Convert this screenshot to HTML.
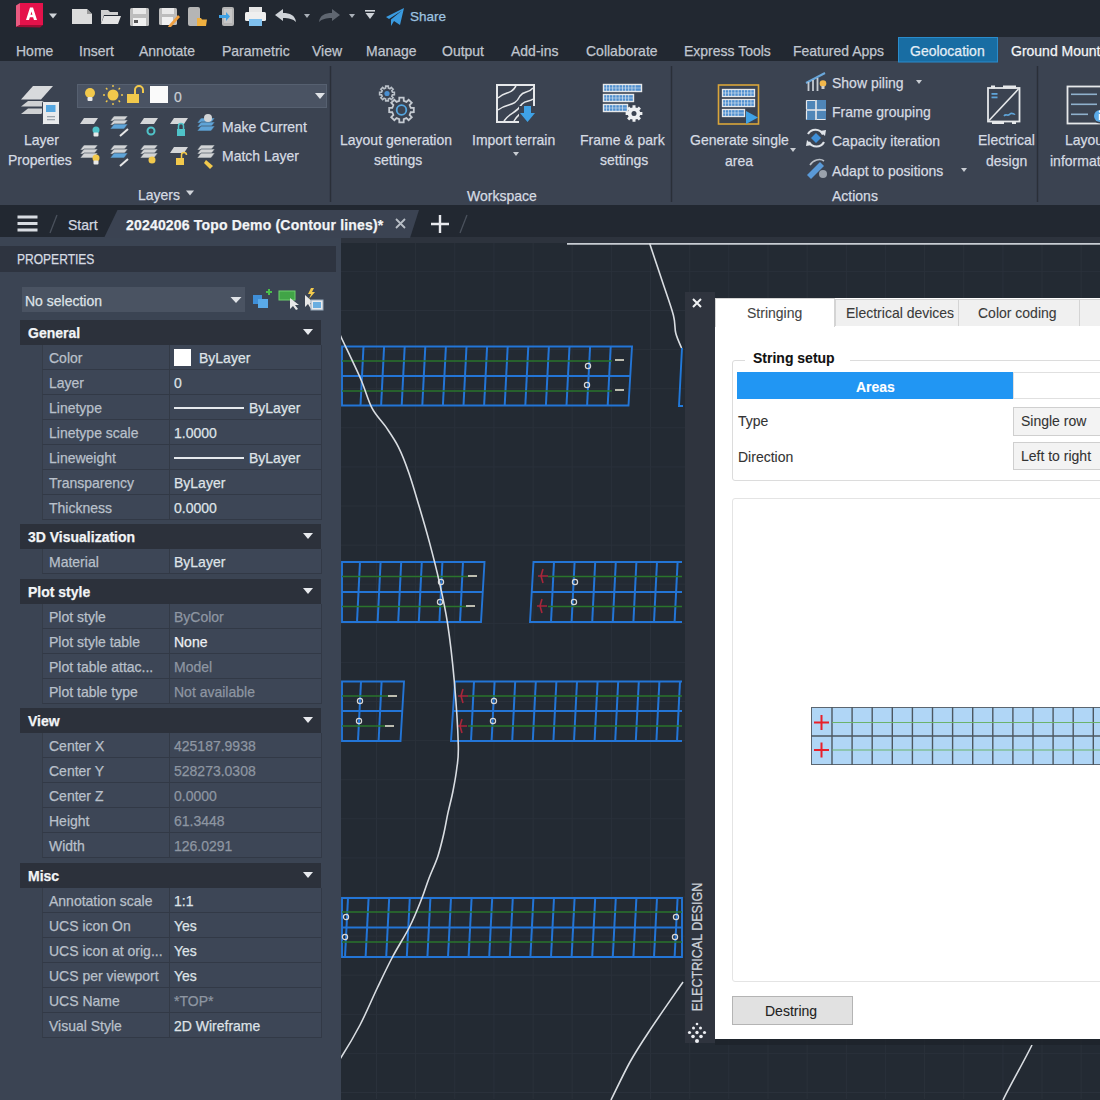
<!DOCTYPE html>
<html><head><meta charset="utf-8">
<style>
*{margin:0;padding:0;box-sizing:border-box}
body *{-webkit-text-stroke:0.25px currentColor}
html,body{width:1100px;height:1100px;overflow:hidden;background:#212730;font-family:"Liberation Sans",sans-serif;font-size:14px}
.a{position:absolute}
.t{position:absolute;white-space:nowrap;line-height:16px;height:16px}
#top{left:0;top:0;width:1100px;height:62px;background:#222831}
#ribbon{left:0;top:61px;width:1100px;height:144px;background:#3b4351}
#ftabs{left:0;top:205px;width:1100px;height:33px;background:#222831}
#strip{left:0;top:237px;width:1100px;height:6px;background:#2d333d}
#strip2{left:0;top:237px;width:341px;height:9px;background:#3b4453}
#props{left:0;top:243px;width:341px;height:857px;background:#3b4453}
#ptitle{left:0;top:246px;width:336px;height:26px;background:#2e3440}
#draw{left:341px;top:243px;width:759px;height:857px;background:#232a33;overflow:hidden}
.tab{color:#c3c9d2}
.rib{color:#d8dde4}
.hdr{left:20px;width:301px;height:25px;background:#2c313b}
.hdr span{position:absolute;left:8px;top:5.6px;line-height:16px;font-weight:700;color:#f2f4f6;font-size:15px;transform:scaleX(0.933);transform-origin:0 0}
.hdr i{position:absolute;left:283px;top:9px;width:0;height:0;border-left:5px solid transparent;border-right:5px solid transparent;border-top:6px solid #e8eaee}
.row{left:42px;width:280px;height:25px;background:#3d4656;border-bottom:1px solid #323946;border-right:1px solid #323946;border-left:1px solid #353c48}
.row .k{position:absolute;left:6px;top:5.6px;line-height:16px;color:#b9c0ca;white-space:nowrap;font-size:15px;transform:scaleX(0.933);transform-origin:0 0}
.row .v{position:absolute;left:126px;top:0;height:24px;width:152px;border-left:1px solid #333a46}
.row .v span{position:absolute;left:4px;top:5.6px;line-height:16px;color:#dfe3e8;white-space:nowrap;font-size:15px;transform:scaleX(0.933);transform-origin:0 0}
.row .v span.g{color:#8e96a2}
.row .v span.w{color:#eef0f3}
.row .v b.sw{position:absolute;left:4px;top:4px;width:17px;height:17px;background:#fff}
.row .v b.ln{position:absolute;left:4px;top:12px;width:70px;height:2px;background:#e6e9ed}

.ns{-webkit-text-stroke:0.1px currentColor}

</style></head><body>
<div id="top" class="a"></div>
<div id="ribbon" class="a"></div>
<svg class="a" style="left:0;top:0" width="1100" height="205"><path d="M20,3 L43,3 L43,25 L20,25 Z" fill="#e5124b"/><path d="M16,5.5 L20,3 L20,25 L16,27 Z" fill="#ea5a80"/><path d="M16,27 L20,25 L43,25 L40,27.5 Z" fill="#9e0c34"/><path d="M26,20 L30,7.6 L33,7.6 L37,20 L34,20 L33.1,17.2 L29.9,17.2 L29,20 Z M30.6,14.8 L32.4,14.8 L31.5,11.5 Z" fill="#fff"/><path d="M49.0,13.5 L57.0,13.5 L53,18.5 Z" fill="#cfd3d8"/><path d="M72,9 L87,9 L92,14 L92,24 L72,24 Z" fill="#dcdcdc"/><path d="M87,9 L87,14 L92,14 Z" fill="#9a9a9a"/><path d="M101,10 L108,10 L110,12 L118,12 L118,15 L104,15 L101,24 Z" fill="#cfcfcf"/><path d="M104,16 L121,16 L118,24 L101,24 Z" fill="#e4e4e4"/><rect x="130" y="8" width="19" height="18" rx="1.5" fill="#bdbdbd"/><rect x="133" y="8" width="13" height="6" fill="#e8e8e8"/><rect x="133" y="18" width="13" height="8" fill="#f0f0f0"/><rect x="134" y="20" width="4" height="3" fill="#555"/><rect x="159" y="8" width="18" height="17" rx="1.5" fill="#bdbdbd"/><rect x="162" y="8" width="12" height="6" fill="#e8e8e8"/><rect x="162" y="17" width="11" height="8" fill="#f0f0f0"/><path d="M169,25 L178,15 L180,17 L171,27 L168,27 Z" fill="#f0a040"/><rect x="188" y="7" width="12" height="19" rx="2" fill="#b5b5b5"/><path d="M197,18 L201,18 L202,19.5 L207,19.5 L206,26 L197,26 Z" fill="#f0b040"/><rect x="222" y="7" width="12" height="19" rx="2" fill="#b5b5b5"/><rect x="224" y="9" width="8" height="14" fill="#c8c8c8"/><path d="M219,15 L226,15 L226,12 L230,16.5 L226,21 L226,18 L219,18 Z" fill="#3fa2e6"/><rect x="249" y="7" width="13" height="6" fill="#e6e6e6"/><rect x="245" y="12" width="21" height="9" rx="1.5" fill="#efefef"/><rect x="249" y="19" width="13" height="7" fill="#7fc0ee"/><path d="M275,15 L283,9 L283,13 C290,13 295,15 296,22 C293,19 289,18 283,18 L283,21 Z" fill="#cfd3d8"/><path d="M304.0,14.0 L310.0,14.0 L307,18.0 Z" fill="#aab0b8"/><path d="M340,15 L332,9 L332,13 C325,13 320,15 319,22 C322,19 326,18 332,18 L332,21 Z" fill="#5f6670"/><path d="M349.0,14.0 L355.0,14.0 L352,18.0 Z" fill="#aab0b8"/><rect x="365" y="10" width="10" height="1.6" fill="#cfd3d8"/><path d="M365.5,13.0 L374.5,13.0 L370,19.0 Z" fill="#cfd3d8"/><path d="M386,17 L404,8 L400,25 L394,21 L391,26 L391,19.5 L402,10.5 L389,19 Z" fill="#3a9be0"/><line x1="330.5" y1="66" x2="330.5" y2="202" stroke="#2a2f38" stroke-width="1.5"/><line x1="671.5" y1="66" x2="671.5" y2="202" stroke="#2a2f38" stroke-width="1.5"/><line x1="1037.5" y1="66" x2="1037.5" y2="202" stroke="#2a2f38" stroke-width="1.5"/><path d="M21,114 L28,108.5 L48,108.5 L41,114 Z" fill="#cfd1d3"/><path d="M21,106.5 L28,101 L50,101 L43,106.5 Z" fill="#cfd1d3"/><path d="M21,99.5 L33,86 L53,86 L41,99.5 Z" fill="#d8dadc"/><rect x="42.5" y="101.5" width="17" height="23" rx="1" fill="#e8eaec" stroke="#3b4351" stroke-width="1"/><rect x="46" y="105" width="9.5" height="7" fill="#54a6e0"/><rect x="47" y="116" width="8" height="1.3" fill="#9aa4ad"/><rect x="47" y="119" width="8" height="1.3" fill="#9aa4ad"/><rect x="77.5" y="84.5" width="249" height="23" fill="#4a5363" stroke="#566070" stroke-width="1"/><circle cx="90" cy="93" r="5" fill="#f2c94c"/><rect x="87.5" y="97" width="5" height="4" rx="1" fill="#e8e8e8"/><circle cx="113" cy="95" r="5.5" fill="#f2c94c"/><line x1="121.0" y1="95.0" x2="123.0" y2="95.0" stroke="#f2c94c" stroke-width="1.4"/><line x1="105.0" y1="95.0" x2="103.0" y2="95.0" stroke="#f2c94c" stroke-width="1.4"/><line x1="113.0" y1="103.0" x2="113.0" y2="105.0" stroke="#f2c94c" stroke-width="1.4"/><line x1="113.0" y1="87.0" x2="113.0" y2="85.0" stroke="#f2c94c" stroke-width="1.4"/><line x1="118.6" y1="100.6" x2="120.0" y2="102.0" stroke="#f2c94c" stroke-width="1.4"/><line x1="107.4" y1="100.6" x2="106.0" y2="102.0" stroke="#f2c94c" stroke-width="1.4"/><line x1="118.6" y1="89.4" x2="120.0" y2="88.0" stroke="#f2c94c" stroke-width="1.4"/><line x1="107.4" y1="89.4" x2="106.0" y2="88.0" stroke="#f2c94c" stroke-width="1.4"/><rect x="127" y="94" width="12" height="9" fill="#f2c94c"/><path d="M135,94 L135,90 A4,4 0 0 1 143,90 L143,93" stroke="#f2c94c" stroke-width="2" fill="none"/><rect x="150" y="86" width="18" height="17" fill="#fafafa"/><path d="M315.0,93.0 L325.0,93.0 L320,99.0 Z" fill="#e0e3e7"/><path d="M84,118 L98,118 L94,124 L80,124 Z" fill="#d4d6d8"/><circle cx="96" cy="130" r="3.5" fill="#4fc3c9"/><rect x="93.5" y="132.5" width="5" height="4" rx="1" fill="#e8e8e8"/><path d="M114,116 L128,116 L124,121 L110,121 Z" fill="#d2d4d6" stroke="#3b4351" stroke-width="0.6"/><path d="M114,120 L128,120 L124,125 L110,125 Z" fill="#d2d4d6" stroke="#3b4351" stroke-width="0.6"/><path d="M114,124 L128,124 L124,129 L110,129 Z" fill="#5fa4d8" stroke="#3b4351" stroke-width="0.6"/><path d="M120,136 L128,129" stroke="#e8e8e8" stroke-width="2"/><path d="M144,118 L158,118 L154,124 L140,124 Z" fill="#d4d6d8"/><circle cx="151" cy="131" r="3.5" fill="none" stroke="#4fc3c9" stroke-width="2"/><path d="M174,118 L188,118 L184,124 L170,124 Z" fill="#d4d6d8"/><rect x="177" y="129" width="8" height="7" fill="#4fc3c9"/><path d="M178.5,129 L178.5,126 A2.5,2.5 0 0 1 183.5,126 L183.5,129" stroke="#4fc3c9" stroke-width="1.5" fill="none"/><path d="M201,118 L215,118 L211,123 L197,123 Z" fill="#5fa4d8" stroke="#3b4351" stroke-width="0.6"/><path d="M201,122 L215,122 L211,127 L197,127 Z" fill="#5fa4d8" stroke="#3b4351" stroke-width="0.6"/><path d="M201,126 L215,126 L211,131 L197,131 Z" fill="#5fa4d8" stroke="#3b4351" stroke-width="0.6"/><circle cx="208" cy="118" r="4" fill="#d2d4d6"/><path d="M84,145 L98,145 L94,150 L80,150 Z" fill="#d2d4d6" stroke="#3b4351" stroke-width="0.6"/><path d="M84,149 L98,149 L94,154 L80,154 Z" fill="#d2d4d6" stroke="#3b4351" stroke-width="0.6"/><path d="M84,153 L98,153 L94,158 L80,158 Z" fill="#d2d4d6" stroke="#3b4351" stroke-width="0.6"/><circle cx="96" cy="158" r="3.5" fill="#f2c94c"/><rect x="93.5" y="160.5" width="5" height="4" rx="1" fill="#e8e8e8"/><path d="M114,145 L128,145 L124,150 L110,150 Z" fill="#d2d4d6" stroke="#3b4351" stroke-width="0.6"/><path d="M114,149 L128,149 L124,154 L110,154 Z" fill="#d2d4d6" stroke="#3b4351" stroke-width="0.6"/><path d="M114,153 L128,153 L124,158 L110,158 Z" fill="#5fa4d8" stroke="#3b4351" stroke-width="0.6"/><path d="M120,166 L128,159" stroke="#e8e8e8" stroke-width="2"/><path d="M144,145 L158,145 L154,150 L140,150 Z" fill="#d2d4d6" stroke="#3b4351" stroke-width="0.6"/><path d="M144,149 L158,149 L154,154 L140,154 Z" fill="#d2d4d6" stroke="#3b4351" stroke-width="0.6"/><path d="M144,153 L158,153 L154,158 L140,158 Z" fill="#d2d4d6" stroke="#3b4351" stroke-width="0.6"/><circle cx="152" cy="160" r="3.5" fill="#f2c94c"/><path d="M174,147 L188,147 L184,153 L170,153 Z" fill="#d4d6d8"/><rect x="176" y="158" width="8" height="7" fill="#f2c94c"/><path d="M181.5,158 L181.5,155 A2.5,2.5 0 0 1 186.5,155" stroke="#f2c94c" stroke-width="1.5" fill="none"/><path d="M201,145 L215,145 L211,150 L197,150 Z" fill="#d2d4d6" stroke="#3b4351" stroke-width="0.6"/><path d="M201,149 L215,149 L211,154 L197,154 Z" fill="#d2d4d6" stroke="#3b4351" stroke-width="0.6"/><path d="M201,153 L215,153 L211,158 L197,158 Z" fill="#d2d4d6" stroke="#3b4351" stroke-width="0.6"/><path d="M206,160 L213,166 L210,169 L204,163 Z" fill="#f2c94c"/><path d="M186.0,190.5 L194.0,190.5 L190,195.5 Z" fill="#d0d4da"/><path d="M392.44,92.17 L394.38,92.18 L394.38,94.82 L392.44,94.83 L391.79,96.41 L393.15,97.79 L391.29,99.65 L389.91,98.29 L388.33,98.94 L388.32,100.88 L385.68,100.88 L385.67,98.94 L384.09,98.29 L382.71,99.65 L380.85,97.79 L382.21,96.41 L381.56,94.83 L379.62,94.82 L379.62,92.18 L381.56,92.17 L382.21,90.59 L380.85,89.21 L382.71,87.35 L384.09,88.71 L385.67,88.06 L385.68,86.12 L388.32,86.12 L388.33,88.06 L389.91,88.71 L391.29,87.35 L393.15,89.21 L391.79,90.59 Z" fill="none" stroke="#b9c0c8" stroke-width="1.6"/><circle cx="387" cy="93.5" r="2.6" fill="#4a8fd0"/><path d="M410.73,107.75 L413.81,107.80 L413.81,112.20 L410.73,112.25 L409.62,114.93 L411.76,117.15 L408.65,120.26 L406.43,118.12 L403.75,119.23 L403.70,122.31 L399.30,122.31 L399.25,119.23 L396.57,118.12 L394.35,120.26 L391.24,117.15 L393.38,114.93 L392.27,112.25 L389.19,112.20 L389.19,107.80 L392.27,107.75 L393.38,105.07 L391.24,102.85 L394.35,99.74 L396.57,101.88 L399.25,100.77 L399.30,97.69 L403.70,97.69 L403.75,100.77 L406.43,101.88 L408.65,99.74 L411.76,102.85 L409.62,105.07 Z" fill="none" stroke="#c4cad1" stroke-width="1.8"/><circle cx="401.5" cy="110" r="4.8" fill="none" stroke="#54a6e0" stroke-width="1.8"/><rect x="497" y="85" width="37" height="37" fill="none" stroke="#e6e8ea" stroke-width="2"/><path d="M498,98 C506,90 510,96 516,86 M498,110 C508,102 514,108 520,96 C524,90 528,94 533,88 M504,121 C510,112 516,114 522,104 C526,100 530,102 533,99 M514,121 C518,114 522,112 526,110" stroke="#e6e8ea" stroke-width="1.5" fill="none"/><rect x="519" y="106" width="17" height="18" fill="#3b4351"/><path d="M524,106 L531,106 L531,113 L535,113 L527.5,122 L520,113 L524,113 Z" fill="#3fa2e6"/><path d="M513.0,152.0 L519.0,152.0 L516,156.0 Z" fill="#c8ccd2"/><rect x="603.5" y="84.5" width="38" height="7" fill="#4f8fcf" stroke="#e6e8ea" stroke-width="1.4"/><rect x="606.0" y="85" width="0.7" height="6" fill="#d8e4ee"/><rect x="609.2" y="85" width="0.7" height="6" fill="#d8e4ee"/><rect x="612.4" y="85" width="0.7" height="6" fill="#d8e4ee"/><rect x="615.6" y="85" width="0.7" height="6" fill="#d8e4ee"/><rect x="618.8" y="85" width="0.7" height="6" fill="#d8e4ee"/><rect x="622.0" y="85" width="0.7" height="6" fill="#d8e4ee"/><rect x="625.2" y="85" width="0.7" height="6" fill="#d8e4ee"/><rect x="628.4" y="85" width="0.7" height="6" fill="#d8e4ee"/><rect x="631.6" y="85" width="0.7" height="6" fill="#d8e4ee"/><rect x="634.8" y="85" width="0.7" height="6" fill="#d8e4ee"/><rect x="604" y="87.7" width="37" height="0.6" fill="#d8e4ee"/><rect x="603.5" y="94.5" width="30" height="7" fill="#4f8fcf" stroke="#e6e8ea" stroke-width="1.4"/><rect x="606.0" y="95" width="0.7" height="6" fill="#d8e4ee"/><rect x="609.2" y="95" width="0.7" height="6" fill="#d8e4ee"/><rect x="612.4" y="95" width="0.7" height="6" fill="#d8e4ee"/><rect x="615.6" y="95" width="0.7" height="6" fill="#d8e4ee"/><rect x="618.8" y="95" width="0.7" height="6" fill="#d8e4ee"/><rect x="622.0" y="95" width="0.7" height="6" fill="#d8e4ee"/><rect x="625.2" y="95" width="0.7" height="6" fill="#d8e4ee"/><rect x="628.4" y="95" width="0.7" height="6" fill="#d8e4ee"/><rect x="604" y="97.7" width="29" height="0.6" fill="#d8e4ee"/><rect x="603.5" y="104.5" width="24" height="7" fill="#4f8fcf" stroke="#e6e8ea" stroke-width="1.4"/><rect x="606.0" y="105" width="0.7" height="6" fill="#d8e4ee"/><rect x="609.2" y="105" width="0.7" height="6" fill="#d8e4ee"/><rect x="612.4" y="105" width="0.7" height="6" fill="#d8e4ee"/><rect x="615.6" y="105" width="0.7" height="6" fill="#d8e4ee"/><rect x="618.8" y="105" width="0.7" height="6" fill="#d8e4ee"/><rect x="622.0" y="105" width="0.7" height="6" fill="#d8e4ee"/><rect x="604" y="107.7" width="23" height="0.6" fill="#d8e4ee"/><path d="M640.12,112.01 L642.37,112.01 L642.37,114.99 L640.12,114.99 L639.38,116.77 L640.97,118.36 L638.86,120.47 L637.27,118.88 L635.49,119.62 L635.49,121.87 L632.51,121.87 L632.51,119.62 L630.73,118.88 L629.14,120.47 L627.03,118.36 L628.62,116.77 L627.88,114.99 L625.63,114.99 L625.63,112.01 L627.88,112.01 L628.62,110.23 L627.03,108.64 L629.14,106.53 L630.73,108.12 L632.51,107.38 L632.51,105.13 L635.49,105.13 L635.49,107.38 L637.27,108.12 L638.86,106.53 L640.97,108.64 L639.38,110.23 Z" fill="#eef0f2"/><circle cx="634" cy="113.5" r="2.5" fill="#3b4351"/><rect x="718.5" y="85" width="40" height="39" fill="none" stroke="#d9a53a" stroke-width="1.6"/><rect x="722.5" y="89.5" width="32" height="7" fill="#4f8fcf" stroke="#e6e8ea" stroke-width="1.3"/><rect x="725.0" y="90" width="0.7" height="6" fill="#d8e4ee"/><rect x="728.2" y="90" width="0.7" height="6" fill="#d8e4ee"/><rect x="731.4" y="90" width="0.7" height="6" fill="#d8e4ee"/><rect x="734.6" y="90" width="0.7" height="6" fill="#d8e4ee"/><rect x="737.8" y="90" width="0.7" height="6" fill="#d8e4ee"/><rect x="741.0" y="90" width="0.7" height="6" fill="#d8e4ee"/><rect x="744.2" y="90" width="0.7" height="6" fill="#d8e4ee"/><rect x="747.4" y="90" width="0.7" height="6" fill="#d8e4ee"/><rect x="750.6" y="90" width="0.7" height="6" fill="#d8e4ee"/><rect x="723" y="92.7" width="31" height="0.6" fill="#d8e4ee"/><rect x="722.5" y="99.5" width="32" height="7" fill="#4f8fcf" stroke="#e6e8ea" stroke-width="1.3"/><rect x="725.0" y="100" width="0.7" height="6" fill="#d8e4ee"/><rect x="728.2" y="100" width="0.7" height="6" fill="#d8e4ee"/><rect x="731.4" y="100" width="0.7" height="6" fill="#d8e4ee"/><rect x="734.6" y="100" width="0.7" height="6" fill="#d8e4ee"/><rect x="737.8" y="100" width="0.7" height="6" fill="#d8e4ee"/><rect x="741.0" y="100" width="0.7" height="6" fill="#d8e4ee"/><rect x="744.2" y="100" width="0.7" height="6" fill="#d8e4ee"/><rect x="747.4" y="100" width="0.7" height="6" fill="#d8e4ee"/><rect x="750.6" y="100" width="0.7" height="6" fill="#d8e4ee"/><rect x="723" y="102.7" width="31" height="0.6" fill="#d8e4ee"/><rect x="722.5" y="109.5" width="22" height="7" fill="#4f8fcf" stroke="#e6e8ea" stroke-width="1.3"/><rect x="725.0" y="110" width="0.7" height="6" fill="#d8e4ee"/><rect x="728.2" y="110" width="0.7" height="6" fill="#d8e4ee"/><rect x="731.4" y="110" width="0.7" height="6" fill="#d8e4ee"/><rect x="734.6" y="110" width="0.7" height="6" fill="#d8e4ee"/><rect x="737.8" y="110" width="0.7" height="6" fill="#d8e4ee"/><rect x="723" y="112.7" width="21" height="0.6" fill="#d8e4ee"/><path d="M746,111 L758,117.5 L746,124 Z" fill="#3fa2e6"/><path d="M790.0,148.0 L796.0,148.0 L793,152.0 Z" fill="#c8ccd2"/><path d="M806,83 L825,73" stroke="#6aa7da" stroke-width="2"/><path d="M808.5,82 L808.5,91 M813,80 L813,91 M817.5,78 L817.5,91" stroke="#c5cbd2" stroke-width="1.8" fill="none"/><circle cx="823" cy="83.5" r="3.3" fill="#f2b84c"/><rect x="821.5" y="86" width="3" height="3" fill="#d0d0d0"/><rect x="806" y="100" width="20" height="20" fill="#4f86b8"/><path d="M806,110 L826,110 M816,100 L816,120" stroke="#e6e8ea" stroke-width="1.6"/><path d="M806.5,100.5 L815,100.5 M806.5,100.5 L806.5,109 M817,119.5 L825.5,119.5 M806.5,111 L806.5,119.5" stroke="#e6e8ea" stroke-width="1.2"/><path d="M808,134 A8.5,8.5 0 0 1 823,134.5" stroke="#dfe3e8" stroke-width="2.2" fill="none"/><path d="M824,142 A8.5,8.5 0 0 1 809,142" stroke="#dfe3e8" stroke-width="2.2" fill="none"/><path d="M820,131 L825,136 L826,130 Z M812,145 L807,140 L806,146 Z" fill="#dfe3e8"/><path d="M816,133 L821,138 L816,143 L811,138 Z" fill="#3f8fd8"/><path d="M807,175 L820,162 L824,166 L811,179 Z" fill="#5a9ad8"/><path d="M810,165 C813,160 820,158 824,161" stroke="#b8bec6" stroke-width="1.6" fill="none"/><circle cx="823" cy="174" r="4" fill="#9aa2ac"/><path d="M916.0,80.0 L922.0,80.0 L919,84.0 Z" fill="#c8ccd2"/><path d="M961.0,168.0 L967.0,168.0 L964,172.0 Z" fill="#c8ccd2"/><rect x="988" y="88" width="31.5" height="33.5" fill="none" stroke="#e6e8ea" stroke-width="1.8"/><rect x="991" y="85.5" width="4" height="3" fill="#e6e8ea"/><rect x="1003" y="85.5" width="13" height="3" fill="#e6e8ea"/><rect x="992" y="121" width="12" height="3" fill="#e6e8ea"/><rect x="1012" y="121" width="4" height="3" fill="#e6e8ea"/><path d="M989,120.5 L1018.5,89" stroke="#e6e8ea" stroke-width="1.6"/><rect x="991.5" y="93" width="6" height="1.8" fill="#5fa4d8"/><rect x="991.5" y="96.5" width="6" height="1.8" fill="#5fa4d8"/><path d="M1004,116 C1006,113 1008,117 1010,114 C1012,112 1014,115 1015,114" stroke="#5fa4d8" stroke-width="1.6" fill="none"/><rect x="1067.5" y="86.5" width="40" height="37" fill="none" stroke="#e6e8ea" stroke-width="1.8"/><rect x="1071" y="93.5" width="26" height="1.6" fill="#8fb0cc"/><rect x="1071" y="103.5" width="26" height="1.6" fill="#8fb0cc"/><rect x="1071" y="113.5" width="17" height="1.6" fill="#8fb0cc"/><circle cx="1100" cy="116" r="7.5" fill="#3b4351"/><circle cx="1100" cy="116" r="6" fill="#5aaae8"/><rect x="1098.8" y="114" width="2.4" height="6" fill="#fff"/><circle cx="1100" cy="111.5" r="1.2" fill="#fff"/><rect x="898.5" y="37.5" width="99" height="24.5" fill="#186da3" stroke="#2a8ccc" stroke-width="1"/><rect x="998" y="37" width="102" height="25" fill="#3b4351"/></svg><div class="t" style="left:410px;top:8.8px;color:#9ec3e0;font-size:13.5px;font-weight:400;">Share</div><div class="t" style="left:16px;top:43.0px;color:#c0c6cf;font-size:15px;transform:scaleX(0.933);transform-origin:0 0;font-weight:400;">Home</div><div class="t" style="left:79px;top:43.0px;color:#c0c6cf;font-size:15px;transform:scaleX(0.933);transform-origin:0 0;font-weight:400;">Insert</div><div class="t" style="left:139px;top:43.0px;color:#c0c6cf;font-size:15px;transform:scaleX(0.933);transform-origin:0 0;font-weight:400;">Annotate</div><div class="t" style="left:221.5px;top:43.0px;color:#c0c6cf;font-size:15px;transform:scaleX(0.933);transform-origin:0 0;font-weight:400;">Parametric</div><div class="t" style="left:312px;top:43.0px;color:#c0c6cf;font-size:15px;transform:scaleX(0.933);transform-origin:0 0;font-weight:400;">View</div><div class="t" style="left:366px;top:43.0px;color:#c0c6cf;font-size:15px;transform:scaleX(0.933);transform-origin:0 0;font-weight:400;">Manage</div><div class="t" style="left:441.5px;top:43.0px;color:#c0c6cf;font-size:15px;transform:scaleX(0.933);transform-origin:0 0;font-weight:400;">Output</div><div class="t" style="left:511px;top:43.0px;color:#c0c6cf;font-size:15px;transform:scaleX(0.933);transform-origin:0 0;font-weight:400;">Add-ins</div><div class="t" style="left:586px;top:43.0px;color:#c0c6cf;font-size:15px;transform:scaleX(0.933);transform-origin:0 0;font-weight:400;">Collaborate</div><div class="t" style="left:684px;top:43.0px;color:#c0c6cf;font-size:15px;transform:scaleX(0.933);transform-origin:0 0;font-weight:400;">Express Tools</div><div class="t" style="left:793px;top:43.0px;color:#c0c6cf;font-size:15px;transform:scaleX(0.933);transform-origin:0 0;font-weight:400;">Featured Apps</div><div class="t" style="left:910px;top:43.0px;color:#e4eef6;font-size:15px;transform:scaleX(0.933);transform-origin:0 0;font-weight:400;">Geolocation</div><div class="t" style="left:1011px;top:43.0px;color:#f4f6f8;font-size:15px;transform:scaleX(0.933);transform-origin:0 0;font-weight:400;">Ground Mount</div><div class="t" style="left:24px;top:132.0px;color:#d6dbe2;font-size:15px;transform:scaleX(0.933);transform-origin:0 0;font-weight:400;">Layer</div><div class="t" style="left:8px;top:152.0px;color:#d6dbe2;font-size:15px;transform:scaleX(0.933);transform-origin:0 0;font-weight:400;">Properties</div><div class="t" style="left:174px;top:89.0px;color:#c8cdd4;font-size:15px;transform:scaleX(0.933);transform-origin:0 0;font-weight:400;">0</div><div class="t" style="left:222px;top:118.5px;color:#d6dbe2;font-size:15px;transform:scaleX(0.933);transform-origin:0 0;font-weight:400;">Make Current</div><div class="t" style="left:222px;top:147.5px;color:#d6dbe2;font-size:15px;transform:scaleX(0.933);transform-origin:0 0;font-weight:400;">Match Layer</div><div class="t" style="left:138px;top:187.0px;color:#d6dbe2;font-size:15px;transform:scaleX(0.933);transform-origin:0 0;font-weight:400;">Layers</div><div class="t" style="left:339.5px;top:131.5px;color:#d6dbe2;font-size:15px;transform:scaleX(0.933);transform-origin:0 0;font-weight:400;">Layout generation</div><div class="t" style="left:374px;top:152.0px;color:#d6dbe2;font-size:15px;transform:scaleX(0.933);transform-origin:0 0;font-weight:400;">settings</div><div class="t" style="left:471.5px;top:131.5px;color:#d6dbe2;font-size:15px;transform:scaleX(0.933);transform-origin:0 0;font-weight:400;">Import terrain</div><div class="t" style="left:466.5px;top:187.5px;color:#d6dbe2;font-size:15px;transform:scaleX(0.933);transform-origin:0 0;font-weight:400;">Workspace</div><div class="t" style="left:580px;top:131.5px;color:#d6dbe2;font-size:15px;transform:scaleX(0.933);transform-origin:0 0;font-weight:400;">Frame &amp; park</div><div class="t" style="left:600px;top:152.0px;color:#d6dbe2;font-size:15px;transform:scaleX(0.933);transform-origin:0 0;font-weight:400;">settings</div><div class="t" style="left:689.5px;top:132.0px;color:#d6dbe2;font-size:15px;transform:scaleX(0.933);transform-origin:0 0;font-weight:400;">Generate single</div><div class="t" style="left:725px;top:153.0px;color:#d6dbe2;font-size:15px;transform:scaleX(0.933);transform-origin:0 0;font-weight:400;">area</div><div class="t" style="left:831.5px;top:75.0px;color:#d6dbe2;font-size:15px;transform:scaleX(0.933);transform-origin:0 0;font-weight:400;">Show piling</div><div class="t" style="left:831.5px;top:104.0px;color:#d6dbe2;font-size:15px;transform:scaleX(0.933);transform-origin:0 0;font-weight:400;">Frame grouping</div><div class="t" style="left:831.5px;top:133.0px;color:#d6dbe2;font-size:15px;transform:scaleX(0.933);transform-origin:0 0;font-weight:400;">Capacity iteration</div><div class="t" style="left:831.5px;top:163.0px;color:#d6dbe2;font-size:15px;transform:scaleX(0.933);transform-origin:0 0;font-weight:400;">Adapt to positions</div><div class="t" style="left:831.5px;top:187.5px;color:#d6dbe2;font-size:15px;transform:scaleX(0.933);transform-origin:0 0;font-weight:400;">Actions</div><div class="t" style="left:977.5px;top:132.0px;color:#d6dbe2;font-size:15px;transform:scaleX(0.933);transform-origin:0 0;font-weight:400;">Electrical</div><div class="t" style="left:986px;top:153.0px;color:#d6dbe2;font-size:15px;transform:scaleX(0.933);transform-origin:0 0;font-weight:400;">design</div><div class="t" style="left:1065px;top:132.0px;color:#d6dbe2;font-size:15px;transform:scaleX(0.933);transform-origin:0 0;font-weight:400;">Layout</div><div class="t" style="left:1050px;top:153.0px;color:#d6dbe2;font-size:15px;transform:scaleX(0.933);transform-origin:0 0;font-weight:400;">information</div>
<div id="ftabs" class="a"></div>
<div id="strip" class="a"></div><div id="strip2" class="a"></div>
<svg class="a" style="left:0;top:205px" width="1100" height="40"><path d="M104,33 L117.5,5 L419,5 L410,33 Z" fill="#3b4352"/><rect x="17.5" y="10.5" width="20" height="3" fill="#d8dce2"/><rect x="17.5" y="17.0" width="20" height="3" fill="#d8dce2"/><rect x="17.5" y="23.5" width="20" height="3" fill="#d8dce2"/><line x1="57" y1="10" x2="50" y2="28" stroke="#4a515c" stroke-width="1.3"/><path d="M396,14 L405,23 M405,14 L396,23" stroke="#b8bec6" stroke-width="1.8"/><path d="M431,19 L449,19 M440,10 L440,28" stroke="#e8eaee" stroke-width="2.4"/><line x1="467" y1="10" x2="460" y2="28" stroke="#4a515c" stroke-width="1.3"/></svg><div class="t" style="left:68px;top:217.0px;color:#d4d9e0;font-size:15px;transform:scaleX(0.933);transform-origin:0 0;font-weight:400;">Start</div><div class="t" style="left:126px;top:217.0px;color:#f2f4f6;font-size:15px;transform:scaleX(0.933);transform-origin:0 0;font-weight:700;letter-spacing:0.2px">20240206 Topo Demo (Contour lines)*</div>
<div id="props" class="a"></div>
<div id="ptitle" class="a"><span class="t" style="left:17px;top:4.5px;font-size:14px;color:#d6dbe2;transform:scaleX(0.86);transform-origin:0 0">PROPERTIES</span></div>
<div class="a" style="left:22px;top:287px;width:223px;height:25px;background:#4a5362"></div><div class="t" style="left:25px;top:293.0px;color:#dfe3e8;font-size:15px;transform:scaleX(0.933);transform-origin:0 0;font-weight:400;">No selection</div><svg class="a" style="left:0;top:280px" width="341" height="40"><path d="M230.5,17.0 L241.5,17.0 L236,23.0 Z" fill="#e0e3e7"/><rect x="253" y="15" width="9" height="9" fill="#3f8fd8"/><rect x="258" y="19" width="10" height="9" fill="#5aaae8"/><path d="M266,12 L272,12 M269,9 L269,15" stroke="#4cbf4c" stroke-width="2"/><rect x="279" y="11" width="16" height="9" fill="#41a447" stroke="#6fcf6f" stroke-width="1"/><path d="M290,18 L290,29 L293,26 L296,30 L298,29 L295,25 L299,25 Z" fill="#e8e8e8"/><path d="M305,15 L305,27 L308,24 L311,29 L313,28 L310,23 L314,23 Z" fill="#e8e8e8"/><rect x="311" y="20" width="12" height="10" fill="#e8eaec" stroke="#9ab" stroke-width="1"/><rect x="313" y="22" width="8" height="6" fill="#6aaee0"/><path d="M311,8 L308,14 L311,14 L309,19 L315,12 L312,12 L314,8 Z" fill="#f2c94c"/></svg>
<div class="a hdr" style="top:319.5px"><span>General</span><i></i></div>
<div class="a row" style="top:344.5px"><div class="k">Color</div><div class="v"><b class="sw"></b><span style="left:29px">ByLayer</span></div></div>
<div class="a row" style="top:369.5px"><div class="k">Layer</div><div class="v"><span>0</span></div></div>
<div class="a row" style="top:394.5px"><div class="k">Linetype</div><div class="v"><b class="ln"></b><span style="left:79px">ByLayer</span></div></div>
<div class="a row" style="top:419.5px"><div class="k">Linetype scale</div><div class="v"><span>1.0000</span></div></div>
<div class="a row" style="top:444.5px"><div class="k">Lineweight</div><div class="v"><b class="ln"></b><span style="left:79px">ByLayer</span></div></div>
<div class="a row" style="top:469.5px"><div class="k">Transparency</div><div class="v"><span>ByLayer</span></div></div>
<div class="a row" style="top:494.5px"><div class="k">Thickness</div><div class="v"><span>0.0000</span></div></div>
<div class="a hdr" style="top:523.5px"><span>3D Visualization</span><i></i></div>
<div class="a row" style="top:548.5px"><div class="k">Material</div><div class="v"><span>ByLayer</span></div></div>
<div class="a hdr" style="top:578.5px"><span>Plot style</span><i></i></div>
<div class="a row" style="top:603.5px"><div class="k">Plot style</div><div class="v"><span class="g">ByColor</span></div></div>
<div class="a row" style="top:628.5px"><div class="k">Plot style table</div><div class="v"><span class="w">None</span></div></div>
<div class="a row" style="top:653.5px"><div class="k">Plot table attac...</div><div class="v"><span class="g">Model</span></div></div>
<div class="a row" style="top:678.5px"><div class="k">Plot table type</div><div class="v"><span class="g">Not available</span></div></div>
<div class="a hdr" style="top:707.5px"><span>View</span><i></i></div>
<div class="a row" style="top:732.5px"><div class="k">Center X</div><div class="v"><span class="g">425187.9938</span></div></div>
<div class="a row" style="top:757.5px"><div class="k">Center Y</div><div class="v"><span class="g">528273.0308</span></div></div>
<div class="a row" style="top:782.5px"><div class="k">Center Z</div><div class="v"><span class="g">0.0000</span></div></div>
<div class="a row" style="top:807.5px"><div class="k">Height</div><div class="v"><span class="g">61.3448</span></div></div>
<div class="a row" style="top:832.5px"><div class="k">Width</div><div class="v"><span class="g">126.0291</span></div></div>
<div class="a hdr" style="top:862.5px"><span>Misc</span><i></i></div>
<div class="a row" style="top:887.5px"><div class="k">Annotation scale</div><div class="v"><span>1:1</span></div></div>
<div class="a row" style="top:912.5px"><div class="k">UCS icon On</div><div class="v"><span>Yes</span></div></div>
<div class="a row" style="top:937.5px"><div class="k">UCS icon at orig...</div><div class="v"><span>Yes</span></div></div>
<div class="a row" style="top:962.5px"><div class="k">UCS per viewport</div><div class="v"><span>Yes</span></div></div>
<div class="a row" style="top:987.5px"><div class="k">UCS Name</div><div class="v"><span class="g">*TOP*</span></div></div>
<div class="a row" style="top:1012.5px"><div class="k">Visual Style</div><div class="v"><span>2D Wireframe</span></div></div>
<div id="draw" class="a"><svg width="759" height="857" style="position:absolute;left:0;top:0"><path d="M35.5,0V856 M74.6,0V856 M113.8,0V856 M152.9,0V856 M192.1,0V856 M231.2,0V856 M270.4,0V856 M309.5,0V856 M348.7,0V856 M387.8,0V856 M427.0,0V856 M466.1,0V856 M505.3,0V856 M544.4,0V856 M583.6,0V856 M622.7,0V856 M661.9,0V856 M701.0,0V856 M740.2,0V856 M0,28.4H759 M0,67.5H759 M0,106.6H759 M0,145.7H759 M0,184.8H759 M0,223.9H759 M0,263.0H759 M0,302.1H759 M0,341.2H759 M0,380.3H759 M0,419.4H759 M0,458.5H759 M0,497.6H759 M0,536.7H759 M0,575.8H759 M0,614.9H759 M0,654.0H759 M0,693.1H759 M0,732.2H759 M0,771.3H759 M0,810.4H759 M0,849.5H759" stroke="#2a313b" stroke-width="1" fill="none"/><line x1="226" y1="0.8" x2="759" y2="0.8" stroke="#c8cdd3" stroke-width="1.8"/><path d="M1.0,103.5 L291.0,103.5 L287.5,162.5 L1.0,162.5 Z" fill="none" stroke="#2375d6" stroke-width="1.9"/><line x1="1.0" y1="133" x2="289.2" y2="133" stroke="#2375d6" stroke-width="2"/><line x1="22.5" y1="103.5" x2="19.5" y2="162.5" stroke="#2375d6" stroke-width="2"/><line x1="43.1" y1="103.5" x2="40.1" y2="162.5" stroke="#2375d6" stroke-width="2"/><line x1="63.7" y1="103.5" x2="60.7" y2="162.5" stroke="#2375d6" stroke-width="2"/><line x1="84.3" y1="103.5" x2="81.3" y2="162.5" stroke="#2375d6" stroke-width="2"/><line x1="104.9" y1="103.5" x2="101.9" y2="162.5" stroke="#2375d6" stroke-width="2"/><line x1="125.5" y1="103.5" x2="122.5" y2="162.5" stroke="#2375d6" stroke-width="2"/><line x1="146.1" y1="103.5" x2="143.1" y2="162.5" stroke="#2375d6" stroke-width="2"/><line x1="166.7" y1="103.5" x2="163.7" y2="162.5" stroke="#2375d6" stroke-width="2"/><line x1="187.3" y1="103.5" x2="184.3" y2="162.5" stroke="#2375d6" stroke-width="2"/><line x1="207.9" y1="103.5" x2="204.9" y2="162.5" stroke="#2375d6" stroke-width="2"/><line x1="228.5" y1="103.5" x2="225.5" y2="162.5" stroke="#2375d6" stroke-width="2"/><line x1="249.1" y1="103.5" x2="246.1" y2="162.5" stroke="#2375d6" stroke-width="2"/><line x1="269.7" y1="103.5" x2="266.7" y2="162.5" stroke="#2375d6" stroke-width="2"/><line x1="1" y1="118" x2="271" y2="118" stroke="#2a742c" stroke-width="1.7"/><line x1="1" y1="148" x2="271" y2="148" stroke="#2a742c" stroke-width="1.7"/><circle cx="247" cy="123" r="2.6" fill="none" stroke="#d8d8d8" stroke-width="1.2"/><circle cx="246" cy="142" r="2.6" fill="none" stroke="#d8d8d8" stroke-width="1.2"/><line x1="274" y1="117" x2="283" y2="117" stroke="#bdbdb0" stroke-width="2"/><line x1="274" y1="147" x2="283" y2="147" stroke="#bdbdb0" stroke-width="2"/><path d="M1.0,319.0 L143.5,319.0 L140.0,379.0 L1.0,379.0 Z" fill="none" stroke="#2375d6" stroke-width="1.9"/><line x1="1.0" y1="349" x2="141.8" y2="349" stroke="#2375d6" stroke-width="2"/><line x1="19.0" y1="319" x2="16.0" y2="379" stroke="#2375d6" stroke-width="2"/><line x1="39.6" y1="319" x2="36.6" y2="379" stroke="#2375d6" stroke-width="2"/><line x1="60.2" y1="319" x2="57.2" y2="379" stroke="#2375d6" stroke-width="2"/><line x1="80.8" y1="319" x2="77.8" y2="379" stroke="#2375d6" stroke-width="2"/><line x1="101.4" y1="319" x2="98.4" y2="379" stroke="#2375d6" stroke-width="2"/><line x1="122.0" y1="319" x2="119.0" y2="379" stroke="#2375d6" stroke-width="2"/><line x1="1" y1="333.5" x2="127" y2="333.5" stroke="#2a742c" stroke-width="1.7"/><line x1="1" y1="363.5" x2="127" y2="363.5" stroke="#2a742c" stroke-width="1.7"/><circle cx="100" cy="339" r="2.6" fill="none" stroke="#d8d8d8" stroke-width="1.2"/><circle cx="99" cy="359" r="2.6" fill="none" stroke="#d8d8d8" stroke-width="1.2"/><line x1="127" y1="333" x2="136" y2="333" stroke="#bdbdb0" stroke-width="2"/><line x1="125" y1="363" x2="134" y2="363" stroke="#bdbdb0" stroke-width="2"/><path d="M341.0,319.0 L192.5,319.0 L189.0,379.0 L341.0,379.0" fill="none" stroke="#2375d6" stroke-width="1.9"/><line x1="190.8" y1="349" x2="341.0" y2="349" stroke="#2375d6" stroke-width="2"/><line x1="213.0" y1="319" x2="210.0" y2="379" stroke="#2375d6" stroke-width="2"/><line x1="233.6" y1="319" x2="230.6" y2="379" stroke="#2375d6" stroke-width="2"/><line x1="254.2" y1="319" x2="251.2" y2="379" stroke="#2375d6" stroke-width="2"/><line x1="274.8" y1="319" x2="271.8" y2="379" stroke="#2375d6" stroke-width="2"/><line x1="295.4" y1="319" x2="292.4" y2="379" stroke="#2375d6" stroke-width="2"/><line x1="316.0" y1="319" x2="313.0" y2="379" stroke="#2375d6" stroke-width="2"/><line x1="336.6" y1="319" x2="333.6" y2="379" stroke="#2375d6" stroke-width="2"/><line x1="207" y1="333.5" x2="341" y2="333.5" stroke="#2a742c" stroke-width="1.7"/><line x1="207" y1="363.5" x2="341" y2="363.5" stroke="#2a742c" stroke-width="1.7"/><path d="M207.0,333.0 L197.0,333.0 M202.0,326.0 L200.0,333.0 L202.0,340.0" stroke="#a8263a" stroke-width="1.6" fill="none"/><path d="M206.0,363.0 L196.0,363.0 M201.0,356.0 L199.0,363.0 L201.0,370.0" stroke="#a8263a" stroke-width="1.6" fill="none"/><circle cx="234" cy="339" r="2.6" fill="none" stroke="#d8d8d8" stroke-width="1.2"/><circle cx="233" cy="359" r="2.6" fill="none" stroke="#d8d8d8" stroke-width="1.2"/><path d="M1.0,438.5 L63.0,438.5 L59.5,498.0 L1.0,498.0 Z" fill="none" stroke="#2375d6" stroke-width="1.9"/><line x1="1.0" y1="468" x2="61.2" y2="468" stroke="#2375d6" stroke-width="2"/><line x1="20.0" y1="438.5" x2="17.0" y2="498" stroke="#2375d6" stroke-width="2"/><line x1="40.6" y1="438.5" x2="37.6" y2="498" stroke="#2375d6" stroke-width="2"/><line x1="1" y1="453" x2="47" y2="453" stroke="#2a742c" stroke-width="1.7"/><line x1="1" y1="483" x2="47" y2="483" stroke="#2a742c" stroke-width="1.7"/><circle cx="19" cy="458" r="2.6" fill="none" stroke="#d8d8d8" stroke-width="1.2"/><circle cx="18" cy="478" r="2.6" fill="none" stroke="#d8d8d8" stroke-width="1.2"/><line x1="47" y1="453" x2="56" y2="453" stroke="#bdbdb0" stroke-width="2"/><line x1="44" y1="483" x2="53" y2="483" stroke="#bdbdb0" stroke-width="2"/><path d="M341.0,438.5 L114.0,438.5 L110.0,498.0 L341.0,498.0" fill="none" stroke="#2375d6" stroke-width="1.9"/><line x1="112.0" y1="468" x2="341.0" y2="468" stroke="#2375d6" stroke-width="2"/><line x1="133.0" y1="438.5" x2="130.0" y2="498" stroke="#2375d6" stroke-width="2"/><line x1="153.6" y1="438.5" x2="150.6" y2="498" stroke="#2375d6" stroke-width="2"/><line x1="174.2" y1="438.5" x2="171.2" y2="498" stroke="#2375d6" stroke-width="2"/><line x1="194.8" y1="438.5" x2="191.8" y2="498" stroke="#2375d6" stroke-width="2"/><line x1="215.4" y1="438.5" x2="212.4" y2="498" stroke="#2375d6" stroke-width="2"/><line x1="236.0" y1="438.5" x2="233.0" y2="498" stroke="#2375d6" stroke-width="2"/><line x1="256.6" y1="438.5" x2="253.6" y2="498" stroke="#2375d6" stroke-width="2"/><line x1="277.2" y1="438.5" x2="274.2" y2="498" stroke="#2375d6" stroke-width="2"/><line x1="297.8" y1="438.5" x2="294.8" y2="498" stroke="#2375d6" stroke-width="2"/><line x1="318.4" y1="438.5" x2="315.4" y2="498" stroke="#2375d6" stroke-width="2"/><line x1="339.0" y1="438.5" x2="336.0" y2="498" stroke="#2375d6" stroke-width="2"/><line x1="127" y1="453" x2="341" y2="453" stroke="#2a742c" stroke-width="1.7"/><line x1="127" y1="483" x2="341" y2="483" stroke="#2a742c" stroke-width="1.7"/><path d="M127.0,453.0 L117.0,453.0 M122.0,446.0 L120.0,453.0 L122.0,460.0" stroke="#a8263a" stroke-width="1.6" fill="none"/><path d="M126.0,483.0 L116.0,483.0 M121.0,476.0 L119.0,483.0 L121.0,490.0" stroke="#a8263a" stroke-width="1.6" fill="none"/><circle cx="153" cy="458" r="2.6" fill="none" stroke="#d8d8d8" stroke-width="1.2"/><circle cx="152" cy="478" r="2.6" fill="none" stroke="#d8d8d8" stroke-width="1.2"/><path d="M1.0,655.0 L341.0,655.0 L341.0,714.0 L1.0,714.0 Z" fill="none" stroke="#2375d6" stroke-width="1.9"/><line x1="1.0" y1="684.5" x2="341.0" y2="684.5" stroke="#2375d6" stroke-width="2"/><line x1="7.0" y1="655" x2="4.0" y2="714" stroke="#2375d6" stroke-width="2"/><line x1="27.6" y1="655" x2="24.6" y2="714" stroke="#2375d6" stroke-width="2"/><line x1="48.2" y1="655" x2="45.2" y2="714" stroke="#2375d6" stroke-width="2"/><line x1="68.8" y1="655" x2="65.8" y2="714" stroke="#2375d6" stroke-width="2"/><line x1="89.4" y1="655" x2="86.4" y2="714" stroke="#2375d6" stroke-width="2"/><line x1="110.0" y1="655" x2="107.0" y2="714" stroke="#2375d6" stroke-width="2"/><line x1="130.6" y1="655" x2="127.6" y2="714" stroke="#2375d6" stroke-width="2"/><line x1="151.2" y1="655" x2="148.2" y2="714" stroke="#2375d6" stroke-width="2"/><line x1="171.8" y1="655" x2="168.8" y2="714" stroke="#2375d6" stroke-width="2"/><line x1="192.4" y1="655" x2="189.4" y2="714" stroke="#2375d6" stroke-width="2"/><line x1="213.0" y1="655" x2="210.0" y2="714" stroke="#2375d6" stroke-width="2"/><line x1="233.6" y1="655" x2="230.6" y2="714" stroke="#2375d6" stroke-width="2"/><line x1="254.2" y1="655" x2="251.2" y2="714" stroke="#2375d6" stroke-width="2"/><line x1="274.8" y1="655" x2="271.8" y2="714" stroke="#2375d6" stroke-width="2"/><line x1="295.4" y1="655" x2="292.4" y2="714" stroke="#2375d6" stroke-width="2"/><line x1="316.0" y1="655" x2="313.0" y2="714" stroke="#2375d6" stroke-width="2"/><line x1="336.6" y1="655" x2="333.6" y2="714" stroke="#2375d6" stroke-width="2"/><line x1="1" y1="669" x2="341" y2="669" stroke="#2a742c" stroke-width="1.7"/><line x1="1" y1="699" x2="341" y2="699" stroke="#2a742c" stroke-width="1.7"/><circle cx="5" cy="674" r="2.6" fill="none" stroke="#d8d8d8" stroke-width="1.2"/><circle cx="4" cy="694" r="2.6" fill="none" stroke="#d8d8d8" stroke-width="1.2"/><circle cx="335" cy="674" r="2.6" fill="none" stroke="#d8d8d8" stroke-width="1.2"/><circle cx="334" cy="694" r="2.6" fill="none" stroke="#d8d8d8" stroke-width="1.2"/><path d="M-1.0,92.0 C-0.8,92.5 -3.0,87.6 0.4,94.8 C3.8,102.1 14.4,123.8 19.5,135.5 C24.6,147.2 26.7,156.7 30.9,164.8 C35.1,172.9 40.4,177.3 44.9,183.9 C49.3,190.5 53.8,196.7 57.6,204.3 C61.4,211.9 64.4,219.9 67.8,229.7 C71.2,239.4 74.6,251.4 78.0,262.8 C81.4,274.2 84.8,285.7 88.2,298.4 C91.6,311.1 95.3,325.5 98.4,339.2 C101.5,352.9 104.1,364.2 106.6,380.6 C109.1,397.0 111.4,417.1 113.2,437.3 C115.0,457.5 116.9,487.2 117.3,502.0 C117.7,516.8 116.6,518.3 115.7,526.0 C114.8,533.7 113.4,540.7 112.0,548.0 C110.6,555.3 108.6,562.5 107.0,569.7 C105.4,577.0 104.3,584.2 102.6,591.5 C100.9,598.8 99.2,606.1 96.8,613.4 C94.4,620.7 90.7,628.2 88.0,635.2 C85.3,642.2 84.0,647.5 80.8,655.5 C77.6,663.5 73.9,673.2 69.0,683.0 C64.1,692.8 56.9,703.8 51.5,714.0 C46.1,724.2 41.9,733.2 36.5,744.5 C31.1,755.8 25.1,770.3 19.0,782.0 C12.9,793.7 4.0,808.3 0.0,814.5 C-4.0,820.7 -4.2,818.2 -5.0,819.0" stroke="#d9dde2" stroke-width="1.6" fill="none"/><path d="M308.6,0.3 C310.8,6.9 317.7,27.6 321.7,39.6 C325.7,51.6 330.2,63.9 332.4,72.3 C334.6,80.8 333.4,84.9 334.8,90.3 C336.2,95.8 339.6,102.6 340.6,105.0" stroke="#d9dde2" stroke-width="1.6" fill="none"/><path d="M341.0,105.0 L338.0,163.0 L342.0,163.0" stroke="#2179da" stroke-width="1.9" fill="none"/><path d="M342.0,739.0 C336.5,747.0 317.8,773.7 309.0,787.0 C300.2,800.3 295.5,807.3 289.0,819.0 C282.5,830.7 273.2,850.7 270.0,857.0" stroke="#d9dde2" stroke-width="1.6" fill="none"/><path d="M691.0,802.0 C681.0,822.0 671.0,839.0 662.0,857.0" stroke="#d9dde2" stroke-width="1.6" fill="none"/></svg></div>
<div class="a" style="left:715px;top:1039px;width:385px;height:6px;background:#1d2229;opacity:0.7"></div><div class="a" style="left:685px;top:292px;width:30px;height:751px;background:#2f343e"></div><svg class="a" style="left:685px;top:290px" width="30" height="760"><path d="M8,9 L16,17 M16,9 L8,17" stroke="#f0f2f4" stroke-width="2"/><circle cx="12" cy="734" r="1.3" fill="#eceef2"/><circle cx="8.5" cy="738" r="1.5" fill="#eceef2"/><circle cx="15.5" cy="738" r="1.5" fill="#eceef2"/><circle cx="4.5" cy="742.5" r="1.6" fill="#eceef2"/><circle cx="12" cy="742.5" r="1.7" fill="#eceef2"/><circle cx="19.5" cy="742.5" r="1.6" fill="#eceef2"/><circle cx="8" cy="746.5" r="1.8" fill="#eceef2"/><circle cx="16" cy="746.5" r="1.8" fill="#eceef2"/><circle cx="12" cy="751" r="2.0" fill="#eceef2"/></svg><div class="t" style="left:697px;top:947px;color:#cdd2d9;font-size:14.5px;letter-spacing:0px;transform:translate(-50%,-50%) rotate(-90deg) scaleX(0.865);transform-origin:center;width:auto">ELECTRICAL DESIGN</div><div class="a" style="left:715px;top:298px;width:385px;height:741px;background:#ffffff"></div><div class="a" style="left:715px;top:325px;width:385px;height:1px;background:#dadada"></div><div class="a" style="left:835px;top:299px;width:124px;height:27px;background:#f0f0f0;border:1px solid #d4d4d4;border-bottom:none"></div><div class="a" style="left:959px;top:299px;width:121px;height:27px;background:#f0f0f0;border:1px solid #d4d4d4;border-bottom:none;border-left:none"></div><div class="a" style="left:1080px;top:299px;width:30px;height:27px;background:#f0f0f0;border:1px solid #d4d4d4;border-bottom:none;border-left:none"></div><div class="a" style="left:715px;top:298px;width:120px;height:29px;background:#ffffff;border:1px solid #d4d4d4;border-bottom:none"></div><div class="t ns" style="left:746.5px;top:304.6px;color:#444;font-size:15px;transform:scaleX(0.933);transform-origin:0 0;font-weight:400;">Stringing</div><div class="t ns" style="left:846px;top:305.1px;color:#3a3a3a;font-size:15px;transform:scaleX(0.933);transform-origin:0 0;font-weight:400;">Electrical devices</div><div class="t ns" style="left:978px;top:305.1px;color:#3a3a3a;font-size:15px;transform:scaleX(0.933);transform-origin:0 0;font-weight:400;">Color coding</div><div class="a" style="left:732px;top:360px;width:400px;height:121px;border:1px solid #dcdcdc;border-radius:3px"></div><div class="a" style="left:745px;top:350px;width:105px;height:16px;background:#fff"></div><div class="t ns" style="left:752.5px;top:350.2px;color:#111;font-size:15px;transform:scaleX(0.933);transform-origin:0 0;font-weight:700;">String setup</div><div class="a" style="left:737px;top:372px;width:276px;height:27px;background:#2196f3"></div><div class="a" style="left:1013px;top:372px;width:100px;height:27px;background:#fff;border:1px solid #e0e0e0"></div><div class="t ns" style="left:856px;top:378.9px;color:#ffffff;font-size:15px;transform:scaleX(0.933);transform-origin:0 0;font-weight:700;">Areas</div><div class="t ns" style="left:737.5px;top:413.4px;color:#333;font-size:15px;transform:scaleX(0.933);transform-origin:0 0;font-weight:400;">Type</div><div class="t ns" style="left:737.5px;top:448.9px;color:#333;font-size:15px;transform:scaleX(0.933);transform-origin:0 0;font-weight:400;">Direction</div><div class="a" style="left:1013px;top:407px;width:100px;height:29px;background:#f3f3f3;border:1px solid #cfcfcf"></div><div class="a" style="left:1013px;top:442px;width:100px;height:28px;background:#f3f3f3;border:1px solid #cfcfcf"></div><div class="t ns" style="left:1020.5px;top:413.4px;color:#333;font-size:15px;transform:scaleX(0.933);transform-origin:0 0;font-weight:400;">Single row</div><div class="t ns" style="left:1020.5px;top:448.4px;color:#333;font-size:15px;transform:scaleX(0.933);transform-origin:0 0;font-weight:400;">Left to right</div><div class="a" style="left:732px;top:498px;width:400px;height:484px;border:1px solid #e4e4e4;border-radius:3px"></div><svg class="a" style="left:811px;top:707px" width="289" height="59"><rect x="0.5" y="0.5" width="300" height="57" fill="#b0d6f6" stroke="#5c6670" stroke-width="1"/><line x1="0" y1="29" x2="289" y2="29" stroke="#4d5760" stroke-width="1.6"/><line x1="21" y1="0" x2="21" y2="58" stroke="#4d5760" stroke-width="1.4"/><line x1="41.1" y1="0" x2="41.1" y2="58" stroke="#4d5760" stroke-width="1.4"/><line x1="61.2" y1="0" x2="61.2" y2="58" stroke="#4d5760" stroke-width="1.4"/><line x1="81.30000000000001" y1="0" x2="81.30000000000001" y2="58" stroke="#4d5760" stroke-width="1.4"/><line x1="101.4" y1="0" x2="101.4" y2="58" stroke="#4d5760" stroke-width="1.4"/><line x1="121.5" y1="0" x2="121.5" y2="58" stroke="#4d5760" stroke-width="1.4"/><line x1="141.6" y1="0" x2="141.6" y2="58" stroke="#4d5760" stroke-width="1.4"/><line x1="161.7" y1="0" x2="161.7" y2="58" stroke="#4d5760" stroke-width="1.4"/><line x1="181.79999999999998" y1="0" x2="181.79999999999998" y2="58" stroke="#4d5760" stroke-width="1.4"/><line x1="201.89999999999998" y1="0" x2="201.89999999999998" y2="58" stroke="#4d5760" stroke-width="1.4"/><line x1="221.99999999999997" y1="0" x2="221.99999999999997" y2="58" stroke="#4d5760" stroke-width="1.4"/><line x1="242.09999999999997" y1="0" x2="242.09999999999997" y2="58" stroke="#4d5760" stroke-width="1.4"/><line x1="262.2" y1="0" x2="262.2" y2="58" stroke="#4d5760" stroke-width="1.4"/><line x1="282.3" y1="0" x2="282.3" y2="58" stroke="#4d5760" stroke-width="1.4"/><line x1="21" y1="15.5" x2="289" y2="15.5" stroke="#6bb36b" stroke-width="1"/><line x1="21" y1="43" x2="289" y2="43" stroke="#6bb36b" stroke-width="1"/><path d="M3,15.5 L18,15.5 M10.5,8 L10.5,23 M3,43 L18,43 M10.5,35.5 L10.5,50.5" stroke="#e8202a" stroke-width="2"/></svg><div class="a" style="left:731.5px;top:995.5px;width:121px;height:29px;background:#e1e1e1;border:1px solid #b4b4b4"></div><div class="t ns" style="left:764.5px;top:1002.9px;color:#222;font-size:15px;transform:scaleX(0.933);transform-origin:0 0;font-weight:400;">Destring</div>
</body></html>
